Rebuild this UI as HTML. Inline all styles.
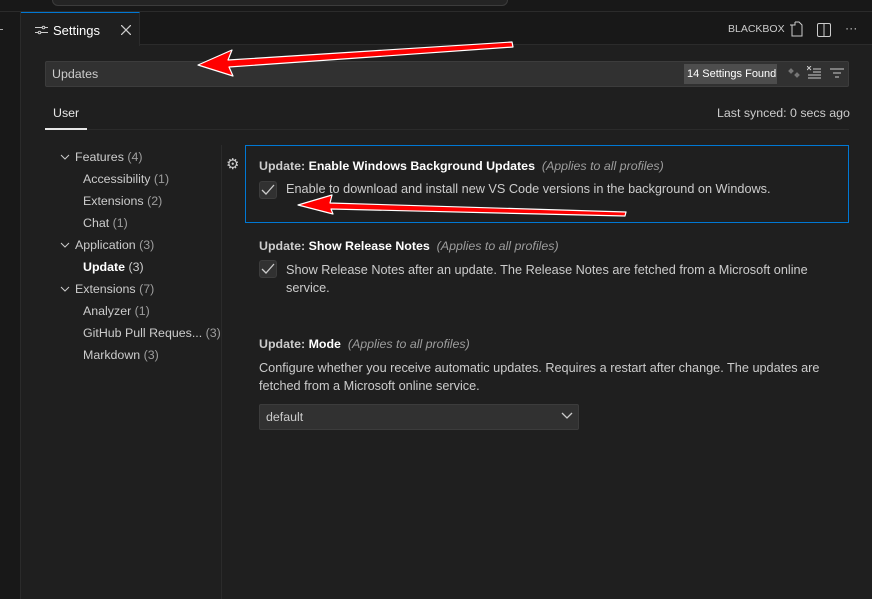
<!DOCTYPE html>
<html><head><meta charset="utf-8"><style>
*{margin:0;padding:0;box-sizing:border-box}
body{width:872px;height:599px;background:#1f1f1f;font-family:"Liberation Sans",sans-serif;font-size:12.4px;color:#ccc;position:relative;overflow:hidden}
.a{position:absolute;white-space:nowrap}
.b{color:#fff;font-weight:bold}
.i{font-style:italic;color:#9d9d9d}
.d{font-size:12.7px}
.cb{position:absolute;width:18px;height:18px;background:#313131;border:1px solid #3c3c3c;border-radius:3px}
.ch{display:inline-block;width:15px;vertical-align:middle}
</style></head><body>
<div class="a" style="left:0;top:0;width:872px;height:12px;background:#181818;border-bottom:1px solid #2b2b2b"></div>
<div class="a" style="left:52px;top:-10px;width:456px;height:16px;border:1px solid #3c3c3c;border-radius:6px;background:#242424"></div>
<div class="a" style="left:0;top:12px;width:872px;height:33px;background:#181818;border-bottom:1px solid #2b2b2b"></div>
<div class="a" style="left:0;top:12px;width:21px;height:587px;background:#181818;border-right:1px solid #2b2b2b"></div>
<div class="a" style="left:0;top:29px;width:3px;height:1px;background:#aaa"></div>
<div class="a" style="left:21px;top:12px;width:119px;height:34px;background:#1f1f1f;border-top:1px solid #0078d4;border-right:1px solid #2b2b2b"></div>
<svg class="a" style="left:35px;top:24px" width="13" height="12" viewBox="0 0 13 12" stroke="#ccc" fill="none"><path d="M0 3.5h7M10 3.5h3M0 8.5h3M6 8.5h7"/><circle cx="8.5" cy="3.5" r="1.3"/><circle cx="4.5" cy="8.5" r="1.3"/></svg>
<div class="a" style="left:53px;top:23px;color:#fff;font-size:13px">Settings</div>
<svg class="a" style="left:121px;top:25px" width="10" height="10" stroke="#ccc" stroke-width="1.3"><path d="M0 0L10 10M10 0L0 10"/></svg>
<div class="a" style="left:728px;top:23px;font-size:10.5px;color:#ccc">BLACKBOX</div>
<svg class="a" style="left:789px;top:21px" width="14" height="16" stroke="#ccc" fill="none"><path d="M3 4v11h10V4l-3-3H6M6 1v3h-5"/></svg>
<svg class="a" style="left:817px;top:23px" width="14" height="14" stroke="#ccc" fill="none"><rect x="0.5" y="0.5" width="13" height="13" rx="1.5"/><path d="M7 0.5v13"/></svg>
<div class="a" style="left:845px;top:21px;color:#ccc">···</div>

<div class="a" style="left:45px;top:61px;width:804px;height:26px;background:#313131;border:1px solid #3c3c3c;border-radius:2px"></div>
<div class="a" style="left:52px;top:67px;color:#ccc">Updates</div>
<div class="a" style="left:684px;top:64px;width:93px;height:20px;background:#4d4d4d;color:#fff;font-size:11px;padding:4px 3px">14 Settings Found</div>
<svg class="a" style="left:787px;top:67px" width="14" height="12" fill="#777"><rect x="2" y="2" width="4" height="4" transform="rotate(45 4 4)"/><rect x="8" y="6" width="4" height="4" transform="rotate(45 10 8)"/></svg>
<svg class="a" style="left:807px;top:66px" width="14" height="13" stroke="#ccc" fill="none"><path d="M0 0l4 4M4 0L0 4M6 3h8M6 6h8M1 9h13M1 12h13"/></svg>
<svg class="a" style="left:830px;top:68px" width="14" height="10" stroke="#ccc"><path d="M0 1h14M3 5h8M5 9h4"/></svg>

<div class="a" style="left:53px;top:106px;color:#e7e7e7">User</div>
<div class="a" style="left:45px;top:128px;width:42px;height:2px;background:#e7e7e7"></div>
<div class="a" style="left:87px;top:129px;width:762px;height:1px;background:#2b2b2b"></div>
<div class="a" style="left:717px;top:106px;color:#ccc">Last synced: 0 secs ago</div>

<div class="a" style="left:221px;top:145px;width:1px;height:454px;background:#2b2b2b"></div>
<div class="a" style="left:60px;top:146px;line-height:22px">
<div><svg class="ch" width="15" height="8" stroke="#ccc" fill="none"><path d="M1 1l4 4 4-4"/></svg>Features <span style="color:#9d9d9d">(4)</span></div>
<div style="padding-left:23px">Accessibility <span style="color:#9d9d9d">(1)</span></div>
<div style="padding-left:23px">Extensions <span style="color:#9d9d9d">(2)</span></div>
<div style="padding-left:23px">Chat <span style="color:#9d9d9d">(1)</span></div>
<div><svg class="ch" width="15" height="8" stroke="#ccc" fill="none"><path d="M1 1l4 4 4-4"/></svg>Application <span style="color:#9d9d9d">(3)</span></div>
<div style="padding-left:23px"><b style="color:#fff">Update</b> (3)</div>
<div><svg class="ch" width="15" height="8" stroke="#ccc" fill="none"><path d="M1 1l4 4 4-4"/></svg>Extensions <span style="color:#9d9d9d">(7)</span></div>
<div style="padding-left:23px">Analyzer <span style="color:#9d9d9d">(1)</span></div>
<div style="padding-left:23px">GitHub Pull Reques... <span style="color:#9d9d9d">(3)</span></div>
<div style="padding-left:23px">Markdown <span style="color:#9d9d9d">(3)</span></div>
</div>

<div class="a" style="left:226px;top:155px;color:#ccc;font-size:15px">⚙</div>
<div class="a" style="left:245px;top:145px;width:604px;height:78px;border:1px solid #0078d4"></div>
<div class="a" style="left:259px;top:159px"><span style="font-weight:bold;color:#ccc">Update: </span><span class="b">Enable Windows Background Updates</span> <span class="i">&nbsp;(Applies to all profiles)</span></div>
<div class="cb" style="left:259px;top:181px"></div>
<svg class="a" style="left:261px;top:184px" width="14" height="12" stroke="#ccc" stroke-width="1.3" fill="none"><path d="M1 6l4 4 8-9"/></svg>
<div class="a d" style="left:286px;top:182px">Enable to download and install new VS Code versions in the background on Windows.</div>

<div class="a" style="left:259px;top:239px"><span style="font-weight:bold;color:#ccc">Update: </span><span class="b">Show Release Notes</span> <span class="i">&nbsp;(Applies to all profiles)</span></div>
<div class="cb" style="left:259px;top:260px"></div>
<svg class="a" style="left:261px;top:263px" width="14" height="12" stroke="#ccc" stroke-width="1.3" fill="none"><path d="M1 6l4 4 8-9"/></svg>
<div class="a d" style="left:286px;top:261px;line-height:18px">Show Release Notes after an update. The Release Notes are fetched from a Microsoft online<br>service.</div>

<div class="a" style="left:259px;top:337px"><span style="font-weight:bold;color:#ccc">Update: </span><span class="b">Mode</span> <span class="i">&nbsp;(Applies to all profiles)</span></div>
<div class="a d" style="left:259px;top:359px;line-height:18px">Configure whether you receive automatic updates. Requires a restart after change. The updates are<br>fetched from a Microsoft online service.</div>
<div class="a" style="left:259px;top:404px;width:320px;height:26px;background:#313131;border:1px solid #3c3c3c;border-radius:2px"></div>
<div class="a" style="left:266px;top:410px">default</div>
<svg class="a" style="left:561px;top:412px" width="12" height="8" stroke="#ccc" stroke-width="1.3" fill="none"><path d="M1 1l5 5 5-5"/></svg>

<svg class="a" style="left:0;top:0" width="872" height="599">
<g fill="#f00" stroke="#fff" stroke-width="1.2" stroke-linejoin="round">
<polygon points="512,42 228,60 232,50 198,65 233,76 229,67 513,47"/>
<polygon points="626,212 330,203 332,195 298,205 333,214 331,209 625,216"/>
</g></svg>
</body></html>
